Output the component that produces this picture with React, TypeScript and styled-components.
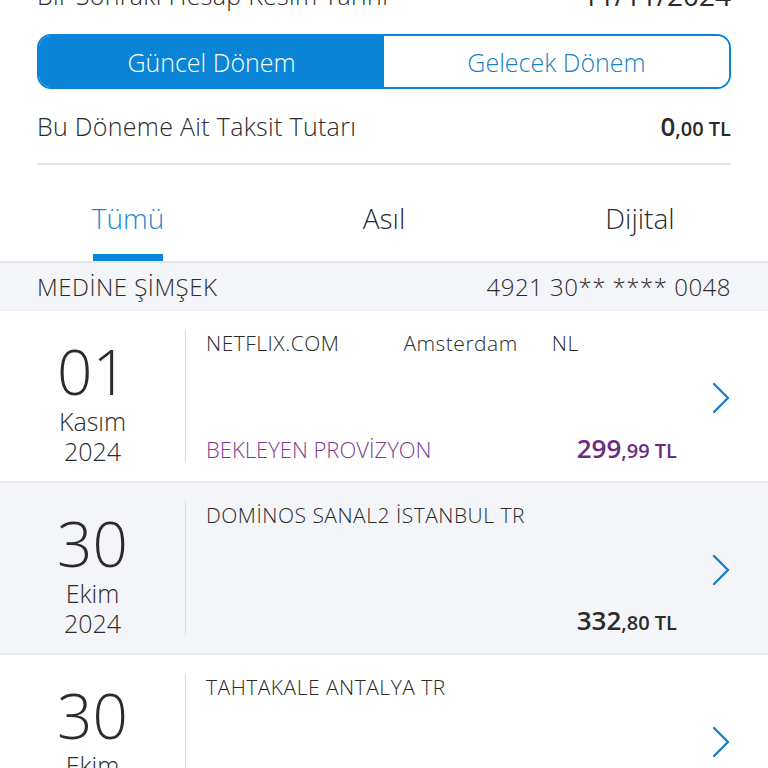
import React, { useState } from 'react';
import styled, { createGlobalStyle } from 'styled-components';

const GlobalStyle = createGlobalStyle`
  html, body {
    margin: 0;
    padding: 0;
    background: #ffffff;
    font-family: "Open Sans", "Noto Sans", sans-serif;
    color: #2b2b2b;
  }
  * { box-sizing: border-box; }
`;

const Page = styled.div`
  width: 768px;
  height: 768px;
  overflow: hidden;
  background: #ffffff;
`;

const Summary = styled.div`
  padding: 0 37px;
`;

const InfoRow = styled.div<{ $height: number }>`
  display: flex;
  justify-content: space-between;
  align-items: center;
  height: ${p => p.$height}px;
  font-size: 25px;
  font-weight: 300;
  letter-spacing: 0.3px;
  color: #2b2b2b;
`;

const TopRow = styled(InfoRow)`
  margin-top: -22px;
`;

const Amount = styled.span<{ $color?: string }>`
  font-weight: 600;
  letter-spacing: 0;
  color: ${p => p.$color || '#2b2b2b'};
  font-size: 26px;
  small {
    font-size: 20px;
  }
`;

const DateValue = styled.span`
  font-weight: 500;
  font-size: 28px;
  letter-spacing: 0;
`;

const Segmented = styled.div`
  display: flex;
  height: 55px;
  margin-top: 22px;
  border: 2px solid #0a84d6;
  border-radius: 14px;
  overflow: hidden;
`;

const Segment = styled.button<{ $active: boolean }>`
  flex: 1;
  border: none;
  font-family: inherit;
  font-size: 25px;
  font-weight: 300;
  background: ${p => (p.$active ? '#0a84d6' : '#ffffff')};
  color: ${p => (p.$active ? '#ffffff' : '#1a7fc4')};
  cursor: pointer;
`;

const Divider = styled.div`
  height: 2px;
  background: #e3e4e6;
`;

const Tabs = styled.div`
  display: grid;
  grid-template-columns: repeat(3, 1fr);
  height: 98px;
  border-bottom: 2px solid #e3e5e8;
`;

const Tab = styled.div<{ $active: boolean }>`
  display: flex;
  justify-content: center;
  align-items: center;
  padding-top: 10px;
  position: relative;
  font-size: 28px;
  font-weight: 300;
  color: ${p => (p.$active ? '#1a8ad0' : '#2b2b2b')};
  cursor: pointer;
  &::after {
    content: '';
    display: ${p => (p.$active ? 'block' : 'none')};
    position: absolute;
    bottom: 0;
    left: 50%;
    transform: translateX(-50%);
    width: 70px;
    height: 7px;
    background: #0a84d6;
  }
`;

const CardBand = styled.div`
  display: flex;
  justify-content: space-between;
  align-items: center;
  height: 48px;
  padding: 0 37px;
  background: #f3f5f8;
  font-size: 24px;
  font-weight: 300;
  letter-spacing: 0.5px;
  color: #2b2b2b;
  border-bottom: 1px solid #e8eaee;
`;

const TxRow = styled.div<{ $shaded: boolean }>`
  display: flex;
  height: 172px;
  padding: 18px 37px 15px 0;
  background: ${p => (p.$shaded ? '#f3f5f8' : '#ffffff')};
  border-bottom: 2px solid #e8eaee;
`;

const DateCol = styled.div`
  width: 186px;
  display: flex;
  flex-direction: column;
  align-items: center;
  justify-content: flex-start;
  border-right: 1px solid #d9dbde;
  margin-bottom: 3px;
  color: #2b2b2b;
  font-weight: 300;
`;

const Day = styled.div`
  font-size: 62px;
  line-height: 60px;
  margin: 12px 0 5px;
  font-weight: 300;
`;

const MonthYear = styled.div`
  font-size: 25px;
  line-height: 30px;
`;

const Details = styled.div`
  flex: 1;
  display: flex;
  flex-direction: column;
  justify-content: space-between;
  padding: 0 34px 0 20px;
`;

const Merchant = styled.div`
  display: flex;
  font-size: 21px;
  letter-spacing: 0.5px;
  font-weight: 300;
  color: #2b2b2b;
  line-height: 28px;
  span:nth-child(2) { margin-left: 64px; }
  span:nth-child(3) { margin-left: 34px; }
`;

const Bottom = styled.div`
  display: flex;
  justify-content: space-between;
  align-items: baseline;
  line-height: 30px;
`;

const Status = styled.span`
  font-size: 22px;
  font-weight: 300;
  color: #7b3b8e;
`;

const Chevron = styled.div`
  display: flex;
  align-items: center;
  color: #1a7fc4;
`;

type Tx = {
  day: string;
  month: string;
  year: string;
  merchant: string[];
  status?: string;
  amount?: [string, string];
};

const transactions: Tx[] = [
  {
    day: '01',
    month: 'Kasım',
    year: '2024',
    merchant: ['NETFLIX.COM', 'Amsterdam', 'NL'],
    status: 'BEKLEYEN PROVİZYON',
    amount: ['299', '99'],
  },
  {
    day: '30',
    month: 'Ekim',
    year: '2024',
    merchant: ['DOMİNOS SANAL2 İSTANBUL TR'],
    amount: ['332', '80'],
  },
  {
    day: '30',
    month: 'Ekim',
    year: '2024',
    merchant: ['TAHTAKALE ANTALYA TR'],
  },
];

const ChevronIcon = () => (
  <svg width="20" height="32" viewBox="0 0 20 32" fill="none">
    <path d="M3 2 L17 16 L3 30" stroke="currentColor" strokeWidth="2.4" strokeLinecap="round" strokeLinejoin="round" />
  </svg>
);

const App: React.FC = () => {
  const [period, setPeriod] = useState<'current' | 'next'>('current');
  const [tab, setTab] = useState('Tümü');

  return (
    <Page>
      <GlobalStyle />
      <Summary>
        <TopRow $height={34}>
          <span>Bir Sonraki Hesap Kesim Tarihi</span>
          <DateValue>11/11/2024</DateValue>
        </TopRow>
        <Segmented>
          <Segment $active={period === 'current'} onClick={() => setPeriod('current')}>
            Güncel Dönem
          </Segment>
          <Segment $active={period === 'next'} onClick={() => setPeriod('next')}>
            Gelecek Dönem
          </Segment>
        </Segmented>
        <InfoRow $height={74}>
          <span>Bu Döneme Ait Taksit Tutarı</span>
          <Amount>
            0<small>,00 TL</small>
          </Amount>
        </InfoRow>
        <Divider />
      </Summary>
      <Tabs>
        {['Tümü', 'Asıl', 'Dijital'].map(t => (
          <Tab key={t} $active={tab === t} onClick={() => setTab(t)}>
            {t}
          </Tab>
        ))}
      </Tabs>
      <CardBand>
        <span>MEDİNE ŞİMŞEK</span>
        <span>4921 30** **** 0048</span>
      </CardBand>
      {transactions.map((tx, i) => (
        <TxRow key={i} $shaded={i % 2 === 1}>
          <DateCol>
            <Day>{tx.day}</Day>
            <MonthYear>{tx.month}</MonthYear>
            <MonthYear>{tx.year}</MonthYear>
          </DateCol>
          <Details>
            <Merchant>
              {tx.merchant.map(m => (
                <span key={m}>{m}</span>
              ))}
            </Merchant>
            <Bottom>
              <Status>{tx.status || ''}</Status>
              {tx.amount && (
                <Amount $color={tx.status ? '#6b2c80' : '#2b2b2b'}>
                  {tx.amount[0]}
                  <small>,{tx.amount[1]} TL</small>
                </Amount>
              )}
            </Bottom>
          </Details>
          <Chevron>
            <ChevronIcon />
          </Chevron>
        </TxRow>
      ))}
    </Page>
  );
};

export default App;
